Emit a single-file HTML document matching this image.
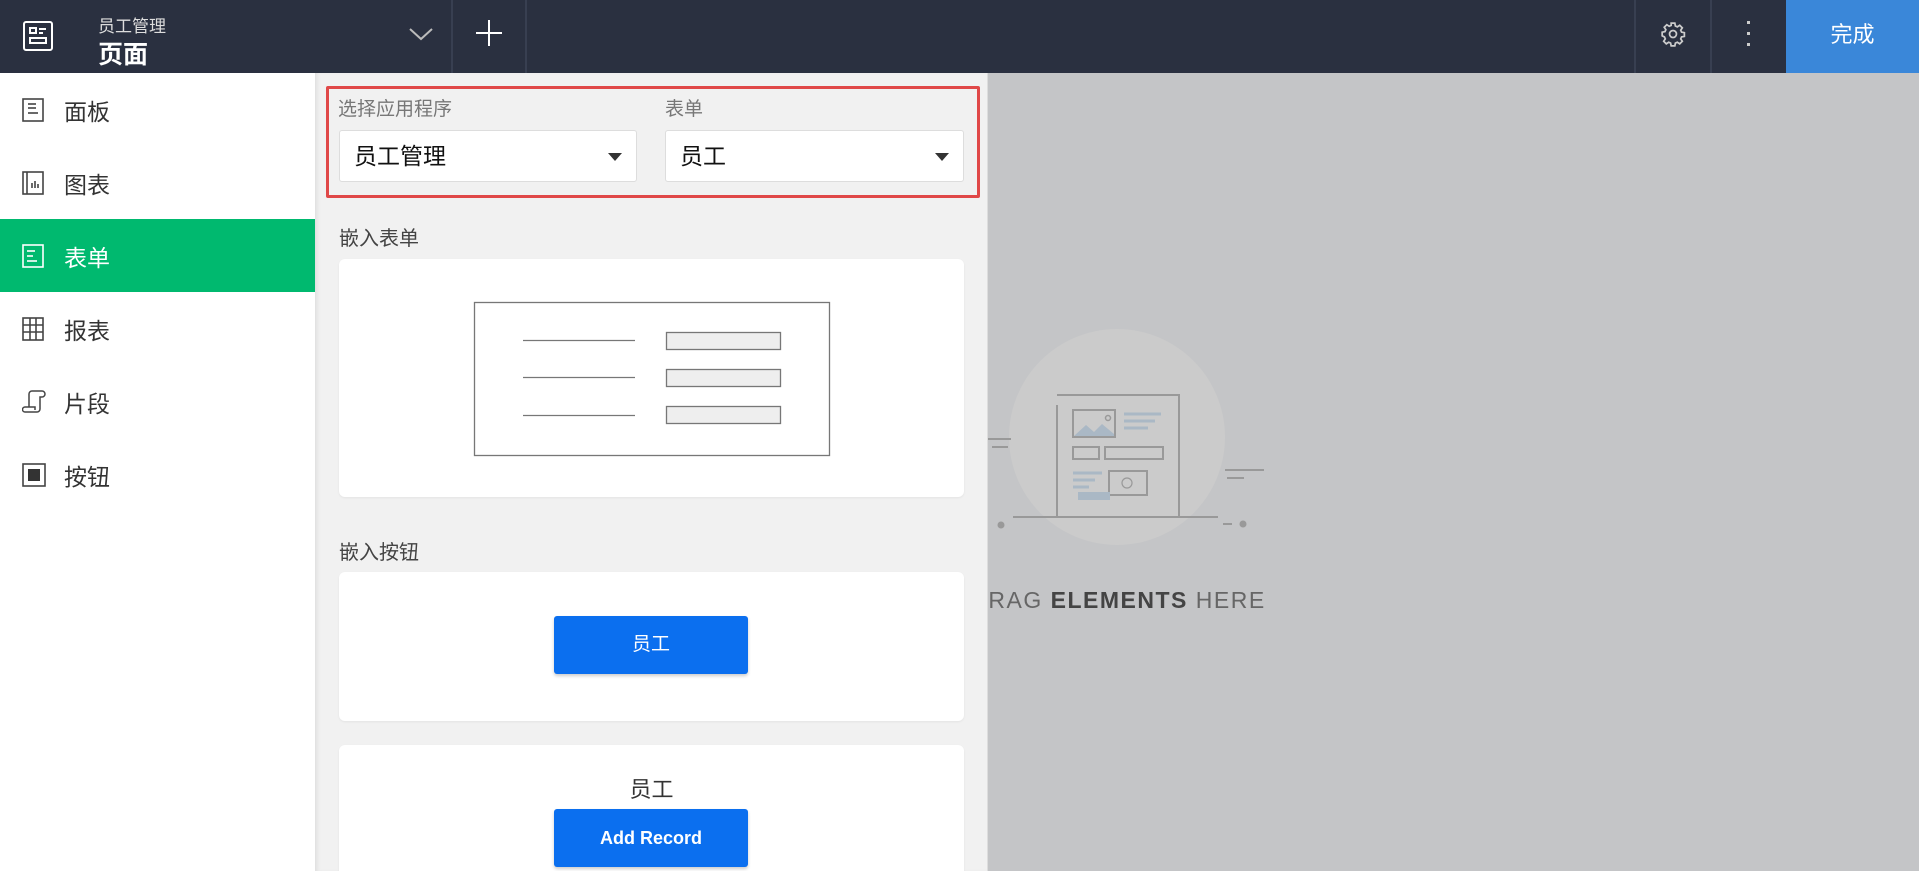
<!DOCTYPE html>
<html><head><meta charset="utf-8"><style>
*{margin:0;padding:0;box-sizing:border-box}
html,body{width:1919px;height:871px;overflow:hidden}
body{position:relative;font-family:"Liberation Sans","Noto Sans CJK SC",sans-serif;background:#c4c5c7}
.abs{position:absolute}
#hdr{left:0;top:0;width:1919px;height:73px;background:#2a3040}
.vd{position:absolute;top:0;width:2px;height:73px;background:#383f51}
#side{left:0;top:73px;width:315px;height:798px;background:#fff}
.item{position:absolute;left:0;width:315px;height:73px;display:flex;align-items:center;color:#333;font-size:23px}
.item svg{position:absolute;left:22px}
.item span{position:absolute;left:64px}
#mid{left:315px;top:73px;width:673px;height:798px;background:#f1f1f1;box-shadow:inset 4px 0 4px -2px rgba(0,0,0,.08);border-right:1px solid #ddd}
.lbl{position:absolute;color:#777;font-size:19px}
.sel{position:absolute;background:#fff;border:1px solid #ddd;border-radius:3px;height:52px;font-size:23px;color:#111;padding-left:14px;line-height:50px}
.sel:after{content:"";position:absolute;right:14px;top:22px;border-left:7px solid transparent;border-right:7px solid transparent;border-top:8px solid #333}
.card{position:absolute;left:339px;width:625px;background:#fff;border-radius:6px;box-shadow:0 1px 2px rgba(0,0,0,.06)}
.btn{position:absolute;left:215px;width:194px;height:58px;background:#0b6fef;border-radius:3px;color:#fff;font-size:19px;text-align:center;line-height:58px;box-shadow:0 2px 3px rgba(0,0,0,.2)}
</style></head><body>
<div id="hdr" class="abs">
 <svg class="abs" style="left:22px;top:20px" width="32" height="32" viewBox="0 0 32 32" fill="none" stroke="#fff" stroke-width="2"><rect x="2" y="2" width="28" height="28" rx="2"/><rect x="8" y="8" width="6" height="5"/><line x1="17" y1="9" x2="24" y2="9"/><line x1="17" y1="13" x2="21" y2="13"/><rect x="8" y="18" width="16" height="5"/></svg>
 <div class="abs" style="left:98px;top:12px;color:#ddd;font-size:17px">员工管理</div>
 <div class="abs" style="left:98px;top:35px;color:#fff;font-size:25px;font-weight:bold">页面</div>
 <svg class="abs" style="left:409px;top:26px" width="24" height="16" viewBox="0 0 24 16" fill="none" stroke="#bbb" stroke-width="2"><polyline points="1,3 12,13 23,3"/></svg>
 <div class="vd" style="left:451px"></div>
 <svg class="abs" style="left:476px;top:20px" width="26" height="26" stroke="#fff" stroke-width="2"><line x1="13" y1="0" x2="13" y2="26"/><line x1="0" y1="13" x2="26" y2="13"/></svg>
 <div class="vd" style="left:525px"></div>
 <div class="vd" style="left:1634px"></div>
 <svg class="abs" style="left:1660px;top:21px" width="26" height="26" viewBox="0 0 24 24" fill="none" stroke="#ccc" stroke-width="1.6"><path d="M10.3 2h3.4l.5 2.6 1.8.8 2.2-1.5 2.4 2.4-1.5 2.2.8 1.8 2.6.5v3.4l-2.6.5-.8 1.8 1.5 2.2-2.4 2.4-2.2-1.5-1.8.8-.5 2.6h-3.4l-.5-2.6-1.8-.8-2.2 1.5-2.4-2.4 1.5-2.2-.8-1.8L2 13.7v-3.4l2.6-.5.8-1.8-1.5-2.2 2.4-2.4 2.2 1.5 1.8-.8z"/><circle cx="12" cy="12" r="3.2"/></svg>
 <div class="vd" style="left:1710px"></div>
 <svg class="abs" style="left:1745px;top:20px" width="8" height="28" fill="#ccc"><rect x="2" y="1" width="3" height="3"/><rect x="2" y="12" width="3" height="3"/><rect x="2" y="23" width="3" height="3"/></svg>
 <div class="abs" style="left:1786px;top:0;width:133px;height:73px;background:#3a87d9;color:#fff;font-size:22px;text-align:center;line-height:70px">完成</div>
</div>
<div id="side" class="abs">
 <div class="item" style="top:0"><svg width="22" height="24" fill="none" stroke="#444" stroke-width="1.6"><rect x="1" y="1" width="20" height="22"/><line x1="6" y1="6" x2="14" y2="6"/><line x1="6" y1="10" x2="14" y2="10"/><line x1="6" y1="15" x2="16" y2="15"/></svg><span>面板</span></div>
 <div class="item" style="top:73px"><svg width="22" height="24" fill="none" stroke="#444" stroke-width="1.6"><rect x="1" y="1" width="20" height="22"/><line x1="5" y1="1" x2="5" y2="23"/><line x1="10" y1="17" x2="10" y2="12"/><line x1="13" y1="17" x2="13" y2="10"/><line x1="16" y1="17" x2="16" y2="13"/></svg><span>图表</span></div>
 <div class="item" style="top:146px;background:#00b96f;color:#fff"><svg width="22" height="24" fill="none" stroke="#fff" stroke-width="1.6"><rect x="1" y="1" width="20" height="22"/><line x1="5" y1="7" x2="13" y2="7"/><line x1="5" y1="12" x2="11" y2="12"/><line x1="5" y1="17" x2="15" y2="17"/></svg><span>表单</span></div>
 <div class="item" style="top:219px"><svg width="22" height="24" fill="none" stroke="#444" stroke-width="1.6"><rect x="1" y="1" width="20" height="22"/><line x1="1" y1="8" x2="21" y2="8"/><line x1="1" y1="15" x2="21" y2="15"/><line x1="8" y1="1" x2="8" y2="23"/><line x1="14" y1="1" x2="14" y2="23"/></svg><span>报表</span></div>
 <div class="item" style="top:292px"><svg width="24" height="24" fill="none" stroke="#444" stroke-width="1.5"><path d="M7 17V4a3 3 0 0 1 3-3h10a3 3 0 0 1 0 6h-2v12a3 3 0 0 1-3 3H3a2 2 0 0 1 0-5h10v3"/></svg><span>片段</span></div>
 <div class="item" style="top:365px"><svg width="24" height="24" fill="none" stroke="#444" stroke-width="1.6"><rect x="1" y="1" width="22" height="22"/><rect x="6" y="6" width="12" height="12" fill="#333" stroke="none"/></svg><span>按钮</span></div>
</div>
<svg class="abs" style="left:0;top:0" width="1919" height="871">
 <circle cx="1117" cy="437" r="108" fill="#cbcbcb"/>
 <g fill="none" stroke="#999" stroke-width="2">
  <path d="M1057 517V405M1057 395h122v122"/>
  <line x1="1013" y1="517" x2="1218" y2="517"/>
  <rect x="1073" y="410" width="42" height="27"/>
  <rect x="1073" y="447" width="26" height="12"/><rect x="1105" y="447" width="58" height="12"/>
  <rect x="1109" y="471" width="38" height="24"/><circle cx="1127" cy="483" r="5" stroke-width="1.2"/>
  <line x1="988" y1="439" x2="1011" y2="439"/><line x1="992" y1="447" x2="1008" y2="447"/>
  <line x1="1225" y1="470" x2="1264" y2="470"/><line x1="1227" y1="478" x2="1244" y2="478"/>
  <line x1="1223" y1="524" x2="1232" y2="524"/>
 </g>
 <path d="M1074 436l12-11 8 7 8-8 12 10v2z" fill="#aab8c5"/>
 <circle cx="1108" cy="418" r="2.5" fill="none" stroke="#999" stroke-width="1.5"/>
 <g stroke="#aab8c5" stroke-width="3"><line x1="1124" y1="414" x2="1161" y2="414"/><line x1="1124" y1="421" x2="1155" y2="421"/><line x1="1124" y1="428" x2="1148" y2="428"/><line x1="1073" y1="473" x2="1102" y2="473"/><line x1="1073" y1="480" x2="1095" y2="480"/><line x1="1073" y1="487" x2="1089" y2="487"/></g>
 <rect x="1078" y="492" width="32" height="8" fill="#aab8c5"/>
 <circle cx="1001" cy="525" r="3.5" fill="#999"/><circle cx="1243" cy="524" r="3.5" fill="#999"/>
 <text x="1118" y="608" text-anchor="middle" font-family="Liberation Sans" font-size="23" fill="#666" letter-spacing="1.5">DRAG <tspan font-weight="bold" fill="#444">ELEMENTS</tspan> HERE</text>
</svg>
<div id="mid" class="abs"></div>
<div class="abs" style="left:326px;top:86px;width:654px;height:112px;border:3px solid #e04848;border-radius:2px"></div>
<div class="lbl" style="left:338px;top:94px">选择应用程序</div>
<div class="lbl" style="left:665px;top:94px">表单</div>
<div class="sel" style="left:339px;top:130px;width:298px">员工管理</div>
<div class="sel" style="left:665px;top:130px;width:299px">员工</div>
<div class="lbl" style="left:339px;top:222px;color:#444;font-size:20px">嵌入表单</div>
<div class="card" style="top:259px;height:238px">
 <svg class="abs" style="left:0;top:0" width="625" height="238" fill="none" stroke="#777" stroke-width="1.3">
  <rect x="135.5" y="43.5" width="355" height="153"/>
  <line x1="184" y1="81.5" x2="296" y2="81.5"/><line x1="184" y1="118.5" x2="296" y2="118.5"/><line x1="184" y1="156.5" x2="296" y2="156.5"/>
  <rect x="327.5" y="73.5" width="114" height="17" fill="#eee"/><rect x="327.5" y="110.5" width="114" height="17" fill="#eee"/><rect x="327.5" y="147.5" width="114" height="17" fill="#eee"/>
 </svg>
</div>
<div class="lbl" style="left:339px;top:536px;color:#444;font-size:20px">嵌入按钮</div>
<div class="card" style="top:572px;height:149px"><div class="btn" style="top:44px">员工</div></div>
<div class="card" style="top:745px;height:126px;border-radius:6px 6px 0 0">
 <div class="abs" style="left:0;width:625px;top:27px;text-align:center;font-size:22px;color:#333">员工</div>
 <div class="btn" style="top:64px;font-weight:bold;font-size:18px">Add Record</div>
</div>
</body></html>
